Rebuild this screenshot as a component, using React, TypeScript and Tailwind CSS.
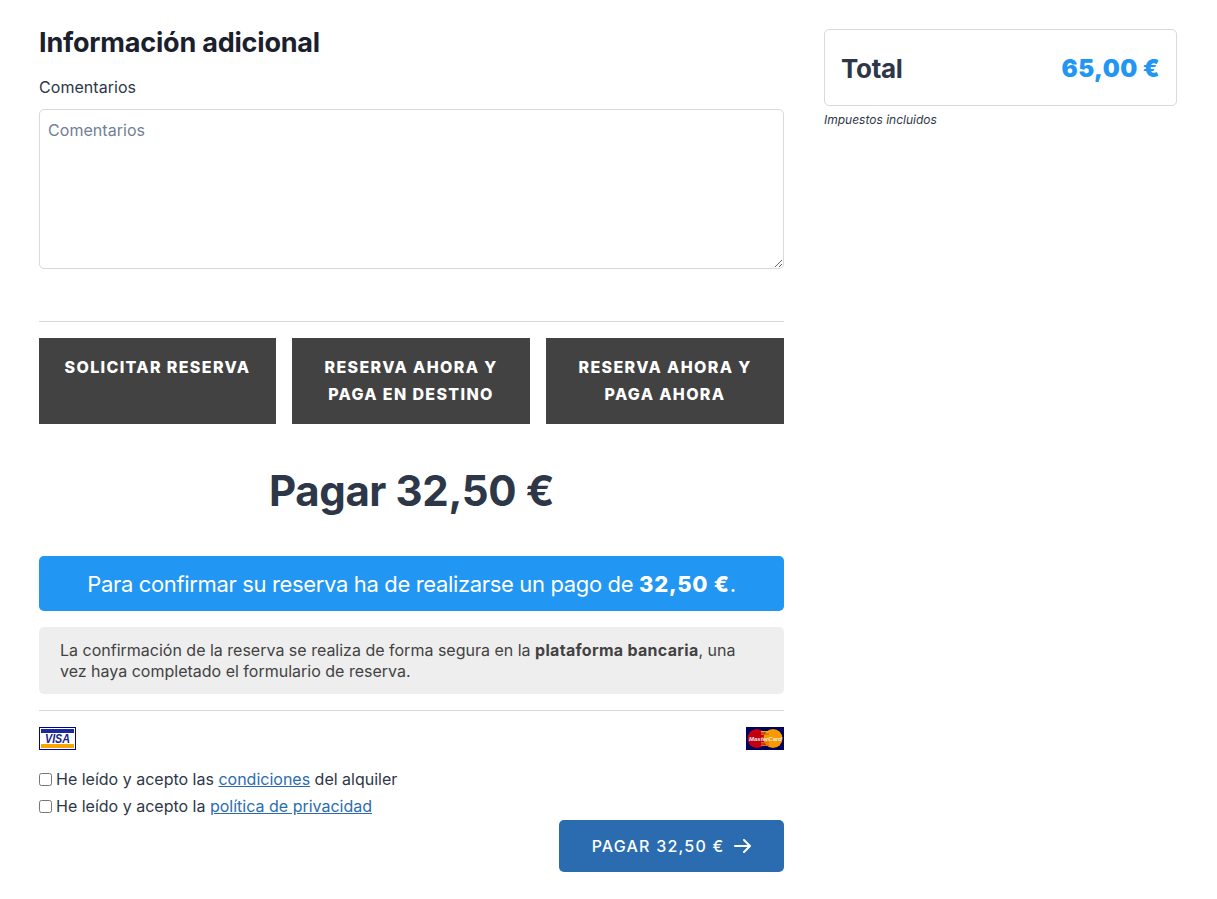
const font = "font-['Inter',sans-serif]";

function VisaLogo() {
    return (
        <svg width="37" height="23" viewBox="0 0 37 23" className="block">
            <rect x="0.5" y="0.5" width="36" height="22" fill="#fff" stroke="#00009a" />
            <rect x="2" y="2" width="33" height="4" fill="#1a2a9c" />
            <rect x="2" y="17" width="33" height="4" fill="#f7a600" />
            <text x="6" y="16" textLength="25" lengthAdjust="spacingAndGlyphs" fontSize="12" fontWeight="800" fontStyle="italic" fill="#14248c" fontFamily="Liberation Sans, sans-serif">VISA</text>
        </svg>
    );
}

function MastercardLogo() {
    return (
        <svg width="38" height="23" viewBox="0 0 38 23" className="block">
            <rect width="38" height="23" fill="#00005f" />
            <circle cx="11" cy="11.5" r="9.5" fill="#c40010" />
            <circle cx="27" cy="11.5" r="9.5" fill="#f99a00" />
            <rect x="15" y="4" width="8" height="1.5" fill="#f0b000" />
            <rect x="15" y="6.5" width="8" height="1.5" fill="#e86a00" />
            <rect x="15" y="15" width="8" height="1.5" fill="#e86a00" />
            <rect x="15" y="17.5" width="8" height="1.5" fill="#e86a00" />
            <text x="3" y="14" fontSize="6" fontWeight="700" fontStyle="italic" fill="#eee" fontFamily="Liberation Sans, sans-serif">MasterCard</text>
        </svg>
    );
}

function OptionButton({ children, className }: { children: React.ReactNode; className: string }) {
    return (
        <button className={`${className} h-[86px] bg-[#424242] px-4 pt-4 flex flex-col justify-start text-white text-[16px] leading-[27px] font-extrabold tracking-[1.35px] text-center`}>
            <span className="block w-full">{children}</span>
        </button>
    );
}

export default function App() {
    return (
        <main className={`${font} min-h-[899px] bg-white text-[#2d3748] flex gap-10 pl-[39px] pr-10 pt-[25px]`}>
            <section className="w-[745px] shrink-0">
                <h2 className="text-[27px] leading-[35px] font-bold text-[#1a202c] tracking-[-0.2px]">Información adicional</h2>
                <label className="block mt-[15px] text-[16px] leading-6 tracking-[0.05px]">Comentarios</label>
                <textarea
                    placeholder="Comentarios"
                    className="block mt-[10px] w-full h-40 border border-[#d9d9d9] rounded-[5px] px-2 py-2 text-[16px] leading-6 tracking-[0.05px] placeholder:text-[#718096] outline-none"
                />
                <hr className="mt-[52px] border-[#d9d9d9]" />
                <div className="flex gap-4 mt-4">
                    <OptionButton className="w-[237px] shrink-0">SOLICITAR RESERVA</OptionButton>
                    <OptionButton className="flex-1">RESERVA AHORA Y PAGA EN DESTINO</OptionButton>
                    <OptionButton className="flex-1">RESERVA AHORA Y PAGA AHORA</OptionButton>
                </div>
                <h1 className="mt-[37px] text-center text-[42px] leading-[60px] font-bold tracking-[-0.4px]">Pagar 32,50 €</h1>
                <div className="mt-[35px] h-[55px] pt-[2px] rounded-[5px] bg-[#2196f3] text-white text-[22px] flex items-center justify-center tracking-[-0.35px]">
                    <span>Para confirmar su reserva ha de realizarse un pago de <strong className="font-extrabold tracking-[0.7px]">32,50 €</strong>.</span>
                </div>
                <div className="mt-4 rounded-[5px] bg-[#eeeeee] text-[#424242] text-[16px] leading-[21px] pl-[21px] pr-[40px] pt-[13px] h-[67px]">
                    La confirmación de la reserva se realiza de forma segura en la <strong className="font-bold tracking-[0.3px]">plataforma bancaria</strong>, una vez haya completado el formulario de reserva.
                </div>
                <hr className="mt-4 border-[#d9d9d9]" />
                <div className="flex justify-between mt-4">
                    <VisaLogo />
                    <MastercardLogo />
                </div>
                <div className="mt-4 text-[16px] leading-[27px]">
                    <label className="flex items-center">
                        <input type="checkbox" className="w-[13px] h-[13px] mr-1" />
                        <span>He leído y acepto las <a href="#" className="text-[#2b6cb0] underline">condiciones</a> del alquiler</span>
                    </label>
                    <label className="flex items-center">
                        <input type="checkbox" className="w-[13px] h-[13px] mr-1" />
                        <span>He leído y acepto la <a href="#" className="text-[#2b6cb0] underline">política de privacidad</a></span>
                    </label>
                </div>
                <div className="flex justify-end">
                    <button className="w-[225px] h-[52px] rounded-[5px] bg-[#2b6cb0] text-white text-[16px] font-medium tracking-[1.2px] flex items-center justify-center gap-[10px]">
                        PAGAR 32,50 €
                        <svg width="17" height="14" viewBox="0 0 17 14" fill="none" stroke="currentColor" strokeWidth="2" strokeLinecap="round" strokeLinejoin="round">
                            <path d="M1 7h15M10 1l6 6-6 6" />
                        </svg>
                    </button>
                </div>
            </section>
            <aside className="w-[353px] pt-1">
                <div className="h-[77px] border border-[#d9d9d9] rounded-[5px] px-4 pt-[2px] flex items-center justify-between">
                    <span className="text-[26px] font-bold tracking-[-0.3px]">Total</span>
                    <span className="text-[24px] font-black text-[#2196f3] tracking-[0.4px]">65,00 €</span>
                </div>
                <p className="mt-[5px] text-[12px] leading-[18px] italic">Impuestos incluidos</p>
            </aside>
        </main>
    );
}
